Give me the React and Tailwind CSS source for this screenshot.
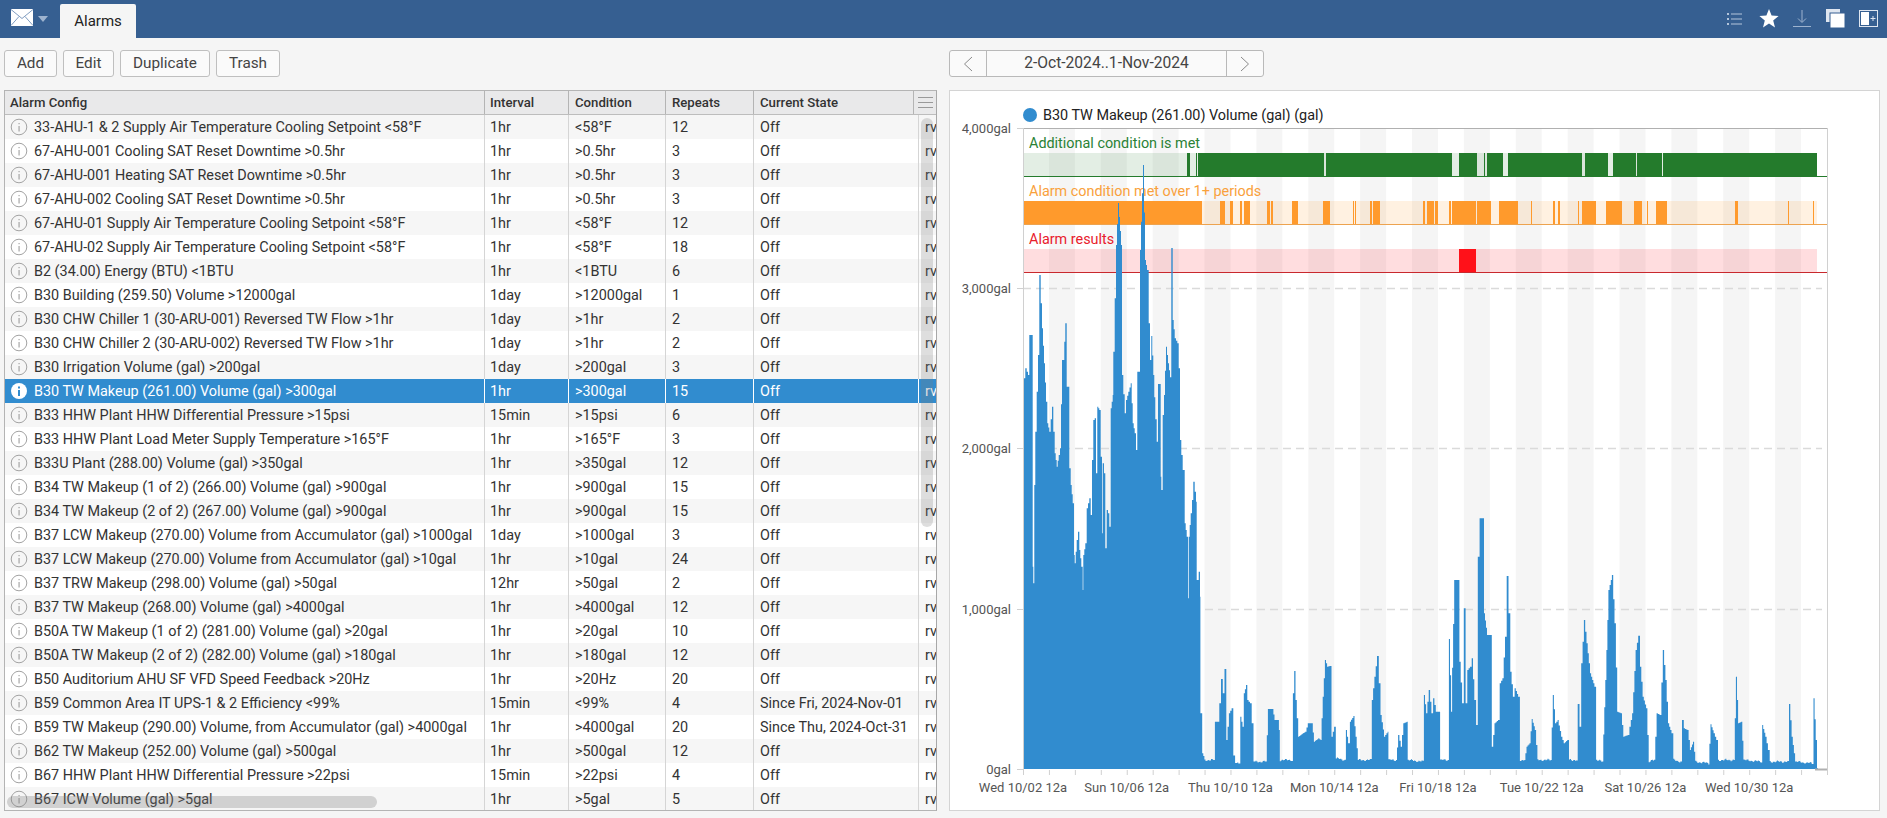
const rows = [
  ['33-AHU-1 & 2 Supply Air Temperature Cooling Setpoint <58°F', '1hr', '<58°F', '12', 'Off'],
  ['67-AHU-001 Cooling SAT Reset Downtime >0.5hr', '1hr', '>0.5hr', '3', 'Off'],
  ['67-AHU-001 Heating SAT Reset Downtime >0.5hr', '1hr', '>0.5hr', '3', 'Off'],
  ['67-AHU-002 Cooling SAT Reset Downtime >0.5hr', '1hr', '>0.5hr', '3', 'Off'],
  ['67-AHU-01 Supply Air Temperature Cooling Setpoint <58°F', '1hr', '<58°F', '12', 'Off'],
  ['67-AHU-02 Supply Air Temperature Cooling Setpoint <58°F', '1hr', '<58°F', '18', 'Off'],
  ['B2 (34.00) Energy (BTU) <1BTU', '1hr', '<1BTU', '6', 'Off'],
  ['B30 Building (259.50) Volume >12000gal', '1day', '>12000gal', '1', 'Off'],
  ['B30 CHW Chiller 1 (30-ARU-001) Reversed TW Flow >1hr', '1day', '>1hr', '2', 'Off'],
  ['B30 CHW Chiller 2 (30-ARU-002) Reversed TW Flow >1hr', '1day', '>1hr', '2', 'Off'],
  ['B30 Irrigation Volume (gal) >200gal', '1day', '>200gal', '3', 'Off'],
  ['B30 TW Makeup (261.00) Volume (gal) >300gal', '1hr', '>300gal', '15', 'Off'],
  ['B33 HHW Plant HHW Differential Pressure >15psi', '15min', '>15psi', '6', 'Off'],
  ['B33 HHW Plant Load Meter Supply Temperature >165°F', '1hr', '>165°F', '3', 'Off'],
  ['B33U Plant (288.00) Volume (gal) >350gal', '1hr', '>350gal', '12', 'Off'],
  ['B34 TW Makeup (1 of 2) (266.00) Volume (gal) >900gal', '1hr', '>900gal', '15', 'Off'],
  ['B34 TW Makeup (2 of 2) (267.00) Volume (gal) >900gal', '1hr', '>900gal', '15', 'Off'],
  ['B37 LCW Makeup (270.00) Volume from Accumulator (gal) >1000gal', '1day', '>1000gal', '3', 'Off'],
  ['B37 LCW Makeup (270.00) Volume from Accumulator (gal) >10gal', '1hr', '>10gal', '24', 'Off'],
  ['B37 TRW Makeup (298.00) Volume (gal) >50gal', '12hr', '>50gal', '2', 'Off'],
  ['B37 TW Makeup (268.00) Volume (gal) >4000gal', '1hr', '>4000gal', '12', 'Off'],
  ['B50A TW Makeup (1 of 2) (281.00) Volume (gal) >20gal', '1hr', '>20gal', '10', 'Off'],
  ['B50A TW Makeup (2 of 2) (282.00) Volume (gal) >180gal', '1hr', '>180gal', '12', 'Off'],
  ['B50 Auditorium AHU SF VFD Speed Feedback >20Hz', '1hr', '>20Hz', '20', 'Off'],
  ['B59 Common Area IT UPS-1 & 2 Efficiency <99%', '15min', '<99%', '4', 'Since Fri, 2024-Nov-01'],
  ['B59 TW Makeup (290.00) Volume, from Accumulator (gal) >4000gal', '1hr', '>4000gal', '20', 'Since Thu, 2024-Oct-31'],
  ['B62 TW Makeup (252.00) Volume (gal) >500gal', '1hr', '>500gal', '12', 'Off'],
  ['B67 HHW Plant HHW Differential Pressure >22psi', '15min', '>22psi', '4', 'Off'],
  ['B67 ICW Volume (gal) >5gal', '1hr', '>5gal', '5', 'Off'],
]

const SELECTED = 11

const greenBars = [[1187, 1190], [1196, 1197], [1198, 1324], [1326, 1452], [1459, 1477], [1484, 1485], [1487, 1503], [1508, 1582], [1585, 1608], [1613, 1636], [1637, 1662], [1663, 1817]]
const orangeBars = [[1023, 1202], [1220, 1225], [1230, 1233], [1240, 1242], [1244, 1250], [1267, 1270], [1271, 1273], [1292, 1298], [1323, 1330], [1353, 1354], [1355, 1356], [1370, 1372], [1373, 1380], [1423, 1425], [1427, 1434], [1435, 1438], [1449, 1451], [1452, 1476], [1477, 1491], [1499, 1518], [1531, 1532], [1553, 1555], [1558, 1560], [1578, 1579], [1582, 1596], [1606, 1622], [1634, 1642], [1647, 1648], [1656, 1667], [1735, 1738], [1788, 1789], [1813, 1814]]

// series outline, read off the reference in two crops with different scales
const leftSeries = [70,355,76,325,84,345,88,225,96,225,98,920,100,970,103,675,106,515,110,395,114,285,118,45,122,130,126,205,132,310,138,425,142,490,148,515,156,440,160,515,164,580,170,620,176,585,180,565,186,300,190,300,196,190,200,380,204,380,208,625,212,675,218,730,222,885,224,910,230,840,234,815,238,870,244,920,248,990,250,885,256,850,260,745,268,715,272,765,276,600,280,480,284,475,288,640,292,440,298,450,302,590,306,820,308,610,312,640,316,865,320,750,324,760,328,800,332,445,338,405,340,275,348,-45,354,-171,363,-45,366,345,374,460,378,420,385,395,392,370,398,490,404,520,408,570,412,335,418,335,420,-30,429,-285,435,0,441,30,446,190,450,300,454,228,460,345,466,478,470,545,474,372,480,372,482,650,484,690,488,465,492,405,498,260,504,310,510,352,514,-36,518,180,524,235,532,250,536,325,540,540,548,630,552,630,554,790,560,830,564,1015,566,830,572,760,576,720,580,665,588,725,590,960,592,960,596,935,600,1010]
const rightSeries = [1,700,5,820,10,840,30,840,34,725,40,725,44,670,48,597,52,640,56,567,60,780,66,700,72,685,76,830,80,848,90,848,92,710,97,740,100,640,105,615,108,660,114,670,118,730,122,845,150,845,155,687,165,687,170,720,176,720,180,750,182,840,208,840,212,640,215,573,218,660,224,770,240,755,246,730,255,730,260,785,270,775,275,780,280,650,285,540,290,560,296,558,300,770,306,740,310,835,330,840,333,750,338,790,342,725,350,708,355,770,360,840,388,840,392,660,398,590,404,528,408,610,412,705,420,770,428,755,430,840,447,840,452,765,458,800,464,730,472,725,474,840,508,845,511,645,516,700,522,630,528,700,532,655,538,695,544,695,548,840,566,840,568,477,573,695,580,300,588,300,592,545,598,670,602,385,606,670,610,570,616,560,620,535,626,660,630,735,634,230,638,115,645,115,648,400,655,465,662,465,666,800,672,730,680,720,684,610,690,595,696,470,700,288,704,400,708,575,714,650,718,625,726,650,730,840,740,840,745,800,752,790,757,717,764,750,770,840,800,840,805,645,810,730,816,720,824,770,830,790,838,780,842,840,858,840,862,672,866,740,870,550,876,420,882,490,890,580,900,620,904,840,918,845,925,600,932,330,940,285,946,430,952,695,960,700,966,770,976,765,980,740,986,700,994,510,1000,467,1004,560,1010,650,1018,685,1024,845,1036,840,1042,700,1050,705,1056,510,1062,600,1068,730,1076,760,1080,840,1096,845,1100,720,1104,745,1112,750,1118,810,1125,785,1130,845,1160,850,1165,733,1172,760,1178,780,1182,840,1218,840,1223,590,1228,730,1235,725,1240,840,1280,845,1283,735,1290,770,1296,810,1300,845,1340,845,1344,672,1350,770,1358,845,1396,850,1400,655,1405,780,1408,866]

const buildSeriesPath = () => {
  const pts = []
  for (let i = 0; i < leftSeries.length; i += 2) pts.push([1000 + leftSeries[i] / 3, 260 + leftSeries[i + 1] / 3])
  for (let i = 0; i < rightSeries.length; i += 2) pts.push([1200 + rightSeries[i] / 2.282, 480 + rightSeries[i + 1] / 3])

  let d = 'M1023,769'
  pts.forEach(([x, y], i) => {
    const next = pts[i + 1] || [x + 1, y]
    const steps = Math.max(1, Math.floor(next[0] - x))
    for (let s = 0; s < steps; s++) {
      const px = x + ((next[0] - x) * s) / steps
      let py = y + ((next[1] - y) * s) / steps
      if (py > 755) py += (Math.sin(px * 1.7) + Math.sin(px * 0.6)) * 0.6
      const endX = x + ((next[0] - x) * (s + 1)) / steps
      d += ` V${py.toFixed(1)} H${endX.toFixed(1)}`
    }
  })
  return `${d} V769 Z`
}

const dayWidth = 804 / 31
const xLabels = ['Wed 10/02 12a', 'Sun 10/06 12a', 'Thu 10/10 12a', 'Mon 10/14 12a', 'Fri 10/18 12a', 'Tue 10/22 12a', 'Sat 10/26 12a', 'Wed 10/30 12a']
const yLabels = [['4,000gal', 128], ['3,000gal', 288], ['2,000gal', 448], ['1,000gal', 609], ['0gal', 769]]

const InfoIcon = ({ active }) => (
  <svg width="18" height="18" viewBox="0 0 18 18" className="shrink-0">
    {active ? (
      <>
        <circle cx="9" cy="9" r="8" fill="#fff" />
        <rect x="8" y="8" width="2" height="6" fill="#318ccf" />
        <rect x="8" y="4.5" width="2" height="2" fill="#318ccf" />
      </>
    ) : (
      <>
        <circle cx="9" cy="9" r="7.8" fill="none" stroke="#a3a3a3" strokeWidth="1" />
        <rect x="8.6" y="8" width="0.9" height="5.5" fill="#8a8a8a" />
        <rect x="8.6" y="5" width="0.9" height="1.2" fill="#8a8a8a" />
      </>
    )}
  </svg>
)

const Button = ({ children, className }) => (
  <button className={`h-[27px] rounded-[3px] border border-[#bfbfbf] bg-[#fafafa] text-[15.3px] text-[#444] ${className}`}>
    {children}
  </button>
)

const TopBar = () => (
  <div className="flex h-[38px] items-end bg-[#365f91] pl-[11px] pr-[9px]">
    <div className="mb-[12px] flex items-center">
      <svg width="22" height="17" viewBox="0 0 22 17">
        <rect width="22" height="17" fill="#fff" />
        <path d="M0 0.5 L11 9.5 L22 0.5 M0 16.5 L8 7.5 M22 16.5 L14 7.5" fill="none" stroke="#7f9cc0" strokeWidth="1" />
      </svg>
      <svg width="10" height="6" viewBox="0 0 10 6" className="ml-[5px] mt-[3px]">
        <path d="M0 0 H10 L5 6 Z" fill="#9db3cf" />
      </svg>
    </div>
    <div className="ml-[12px] flex h-[34px] w-[76px] items-center justify-center rounded-t-[2px] bg-[#f5f5f5] text-[15px] text-[#222]">
      Alarms
    </div>
    <div className="mb-[10px] ml-auto flex items-center">
      <svg width="16" height="14" viewBox="0 0 16 14" className="mr-[16px]">
        <g fill="#b4c5db">
          <rect x="0" y="1" width="2" height="2" />
          <rect x="0" y="6" width="2" height="2" />
          <rect x="0" y="11" width="2" height="2" />
          <rect x="4" y="1.5" width="11" height="1" />
          <rect x="4" y="6.5" width="11" height="1" />
          <rect x="4" y="11.5" width="11" height="1" />
        </g>
      </svg>
      <svg width="20" height="19" viewBox="0 0 20 19" className="mr-[14px]">
        <path d="M10 0 L12.6 6.6 L19.6 7 L14.2 11.5 L16 18.4 L10 14.6 L4 18.4 L5.8 11.5 L0.4 7 L7.4 6.6 Z" fill="#fff" />
      </svg>
      <svg width="18" height="18" viewBox="0 0 18 18" className="mr-[15px]">
        <path d="M9 0 V12 M5 8.5 L9 12.5 L13 8.5 M0 16.5 H18" fill="none" stroke="#9db3cf" strokeWidth="1" />
      </svg>
      <svg width="19" height="19" viewBox="0 0 19 19" className="mr-[14px]">
        <rect x="0" y="0" width="14" height="13" fill="#dfe6f0" />
        <rect x="4" y="4" width="15" height="15" fill="#fff" stroke="#365f91" strokeWidth="1" />
      </svg>
      <svg width="19" height="17" viewBox="0 0 19 17">
        <rect x="0.5" y="0.5" width="18" height="16" fill="none" stroke="#dfe6f0" strokeWidth="1" />
        <rect x="2" y="2" width="8" height="13" fill="#fff" />
        <path d="M14 6 V11 M11.5 8.5 H16.5" stroke="#dfe6f0" strokeWidth="1" />
      </svg>
    </div>
  </div>
)

const AlarmTable = () => (
  <div className="relative h-[721px] overflow-hidden border border-[#b4b4b4] border-r-[#a8a8a8] bg-white text-[14.4px] text-[#333]">
    <div className="grid h-[24px] grid-cols-[480px_84px_97px_88px_159px_1fr] items-center border-b border-[#bdbdbd] bg-[#e9e9ea] text-[13.2px] font-medium">
      <div className="flex h-full items-center border-r border-[#b4b4b4] pl-[5px]">Alarm Config</div>
      <div className="flex h-full items-center border-r border-[#b4b4b4] pl-[5px]">Interval</div>
      <div className="flex h-full items-center border-r border-[#b4b4b4] pl-[6px]">Condition</div>
      <div className="flex h-full items-center border-r border-[#b4b4b4] pl-[6px]">Repeats</div>
      <div className="flex h-full items-center pl-[6px]">Current State</div>
      <div className="flex h-full flex-col items-center justify-center gap-[4px] border-l border-[#b4b4b4]">
        <span className="h-px w-[15px] bg-[#999]" />
        <span className="h-px w-[15px] bg-[#999]" />
        <span className="h-px w-[15px] bg-[#999]" />
      </div>
    </div>
    {rows.map((row, i) => {
      const active = i === SELECTED
      const stripe = i % 2 === 0 ? 'bg-[#f6f6f6]' : 'bg-white'
      const divider = active ? 'border-white' : 'border-[#d5d5d5]'
      return (
        <div key={row[0]} className={`grid h-[24px] grid-cols-[480px_84px_97px_88px_165px_1fr] items-center ${active ? 'bg-[#318ccf] text-white' : stripe}`}>
          <div className={`flex h-full items-center gap-[6px] overflow-hidden whitespace-nowrap border-r ${divider} pl-[5px]`}>
            <InfoIcon active={active} />
            <span className="pt-[2px]">{row[0]}</span>
          </div>
          <div className={`flex h-full items-center border-r ${divider} pl-[5px] pt-[2px]`}>{row[1]}</div>
          <div className={`flex h-full items-center border-r ${divider} pl-[6px] pt-[2px]`}>{row[2]}</div>
          <div className={`flex h-full items-center border-r ${divider} pl-[6px] pt-[2px]`}>{row[3]}</div>
          <div className={`flex h-full items-center border-r ${divider} pl-[6px] pt-[2px]`}>{row[4]}</div>
          <div className="flex h-full items-center overflow-hidden pl-[6px] pt-[2px]">rv</div>
        </div>
      )
    })}
    <div className="absolute left-[916px] top-[27px] h-[409px] w-[12px] rounded-[6px] bg-[#7a7a7a]/25" />
    <div className="absolute left-[2px] top-[705px] h-[12px] w-[370px] rounded-[6px] bg-[#7a7a7a]/30" />
  </div>
)

const Strip = ({ y, label, labelColor, lightFill, solidFill, lineColor, bars }) => (
  <>
    <rect x="1023" y={y} width="794" height="23" fill={lightFill} />
    {bars.map(([a, b]) => (
      <rect key={a} x={a} y={y} width={b - a} height="23" fill={solidFill} />
    ))}
    <rect x="1023" y={y + 23} width="804" height="1" fill={lineColor} />
    <text x="1029" y={y - 5} fontSize="14.4" fill={labelColor}>{label}</text>
  </>
)

const Chart = () => (
  <svg viewBox="950 91 929 719" width="929" height="719" className="block font-['Roboto',sans-serif]">
    {Array.from({ length: 15 }, (_, i) => (
      <rect key={i} x={1023 + dayWidth * (2 * i + 1)} y="128" width={dayWidth} height="641" fill="#f5f5f5" />
    ))}
    {[288, 448, 609].map((y) => (
      <line key={y} x1="1023" x2="1822" y1={y + 0.5} y2={y + 0.5} stroke="#dadada" strokeWidth="1.5" strokeDasharray="8 5" />
    ))}
    <Strip y={153} label="Additional condition is met" labelColor="#2a8236" lightFill="rgba(36,123,44,0.13)" solidFill="#247b2c" lineColor="#247b2c" bars={greenBars} />
    <Strip y={201} label="Alarm condition met over 1+ periods" labelColor="#f9a13c" lightFill="rgba(255,154,44,0.14)" solidFill="#ff9a2c" lineColor="#eda34f" bars={orangeBars} />
    <Strip y={249} label="Alarm results" labelColor="#e8202c" lightFill="rgba(255,17,25,0.14)" solidFill="#ff1119" lineColor="#c8282d" bars={[[1459, 1476]]} />
    <path d={buildSeriesPath()} fill="#318ccf" />

    <line x1="1017" x2="1827" y1="128.5" y2="128.5" stroke="#b0b0b0" />
    <line x1="1023.5" x2="1023.5" y1="128" y2="775" stroke="#d0d0d0" />
    <line x1="1827.5" x2="1827.5" y1="128" y2="775" stroke="#d0d0d0" />
    <line x1="1815" x2="1827" y1="769.5" y2="769.5" stroke="#b0b0b0" strokeWidth="2" />
    {Array.from({ length: 31 }, (_, i) => (
      <line key={i} x1={1023.5 + dayWidth * i} x2={1023.5 + dayWidth * i} y1="770" y2="775" stroke="#d0d0d0" />
    ))}
    {yLabels.map(([label, y]) => (
      <g key={label}>
        <line x1="1017" x2="1023" y1={y + 0.5} y2={y + 0.5} stroke="#d0d0d0" />
        <text x="1011" y={y + 5} textAnchor="end" fontSize="13" fill="#555">{label}</text>
      </g>
    ))}
    {xLabels.map((label, i) => (
      <text key={label} x={1023 + dayWidth * 4 * i} y="792" textAnchor="middle" fontSize="13" fill="#555">{label}</text>
    ))}

    <circle cx="1030" cy="115" r="7" fill="#318ccf" />
    <text x="1043" y="120" fontSize="14.4" fill="#222">B30 TW Makeup (261.00) Volume (gal) (gal)</text>
  </svg>
)

const App = () => (
  <div className="h-[818px] w-[1887px] overflow-hidden bg-[#f5f5f5] font-['Roboto',sans-serif]">
    <TopBar />
    <div className="flex pl-[4px] pt-[12px]">
      <div className="w-[933px]">
        <div className="flex gap-[6px]">
          <Button className="w-[53px]">Add</Button>
          <Button className="w-[51px]">Edit</Button>
          <Button className="w-[90px]">Duplicate</Button>
          <Button className="w-[64px]">Trash</Button>
        </div>
        <div className="mt-[13px]">
          <AlarmTable />
        </div>
      </div>
      <div className="ml-[12px] w-[931px]">
        <div className="flex h-[27px] w-[315px] items-center rounded-[3px] border border-[#b9b9b9] bg-[#fafafa] text-[15.6px] text-[#444]">
          <div className="flex h-full w-[37px] items-center justify-center border-r border-[#b9b9b9]">
            <svg width="10" height="16" viewBox="0 0 10 16"><path d="M9 1 L1.5 8 L9 15" fill="none" stroke="#8a8a8a" /></svg>
          </div>
          <div className="flex-1 text-center">2-Oct-2024..1-Nov-2024</div>
          <div className="flex h-full w-[37px] items-center justify-center border-l border-[#b9b9b9]">
            <svg width="10" height="16" viewBox="0 0 10 16"><path d="M1 1 L8.5 8 L1 15" fill="none" stroke="#8a8a8a" /></svg>
          </div>
        </div>
        <div className="mt-[13px] h-[721px] border border-[#d4d4d4] bg-white">
          <Chart />
        </div>
      </div>
    </div>
  </div>
)

export default App
